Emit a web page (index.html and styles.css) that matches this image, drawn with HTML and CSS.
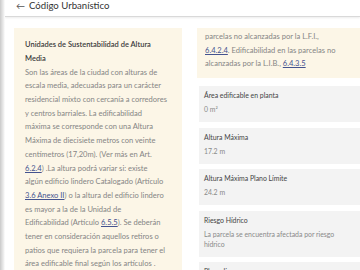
FILE: index.html
```html
<!DOCTYPE html>
<html lang="es">
<head>
<meta charset="utf-8">
<link rel="stylesheet" href="styles.css">
</head>
<body>
<div class="app">
  <div class="edge"></div>
  <div class="panel">
    <header class="topbar"><span class="back">←</span><span class="title">Código Urbanístico</span></header>
    <div class="content">
      <div class="col">
        <section class="note note-first">
          <h2 class="note-title">Unidades de Sustentabilidad de Altura<br>Media</h2>
          <p class="note-text">Son las áreas de la ciudad con alturas de<br>escala media, adecuadas para un carácter<br>residencial mixto con cercanía a corredores<br>y centros barriales. La edificabilidad<br>máxima se corresponde con una Altura<br>Máxima de diecisiete metros con veinte<br>centímetros (17,20m). (Ver más en Art.<br><a href="#">6.2.4</a>) .La altura podrá variar si: existe<br>algún edificio lindero Catalogado (Artículo<br><a href="#">3.6 Anexo II</a>) o la altura del edificio lindero<br>es mayor a la de la Unidad de<br>Edificabilidad (Artículo <a href="#">6.5.5</a>). Se deberán<br>tener en consideración aquellos retiros o<br>patios que requiera la parcela para tener el<br>área edificable final según los artículos .<br>Debe considerarse la Edificabilidad en las</p>
        </section>
      </div>
      <div class="col">
        <section class="note note-cont">
          <p class="note-text">parcelas no alcanzadas por la L.F.I.,<br><a href="#">6.4.2.4</a>. Edificabilidad en las parcelas no<br>alcanzadas por la L.I.B., <a href="#">6.4.3.5</a></p>
        </section>
        <div class="stats">
          <div class="stat"><div class="stat-label">Área edificable en planta</div><div class="stat-value">0 m²</div></div>
          <div class="stat"><div class="stat-label">Altura Máxima</div><div class="stat-value">17.2 m</div></div>
          <div class="stat"><div class="stat-label">Altura Máxima Plano Límite</div><div class="stat-value">24.2 m</div></div>
          <div class="stat"><div class="stat-label">Riesgo Hídrico</div><div class="stat-value">La parcela se encuentra afectada por riesgo<br>hídrico</div></div>
          <div class="stat"><div class="stat-label">Plusvalía</div><div class="stat-value">—</div></div>
        </div>
      </div>
    </div>
  </div>
</div>
</body>
</html>
```
FILE: styles.css
```css
* { box-sizing: border-box; }
html, body { margin: 0; padding: 0; }
body {
  width: 360px;
  height: 270px;
  overflow: hidden;
  background: #fff;
  font-family: Lato, "Open Sans", sans-serif;
}
.app { display: flex; height: 270px; }
.edge {
  width: 5px;
  flex: none;
  background: linear-gradient(to right, #c9c9c9 0, #dedede 2px, #f2f2f2 4px, #fff 5px);
}
.panel { flex: 1; min-width: 0; display: flex; flex-direction: column; overflow: hidden; }
.topbar {
  height: 17px;
  flex: none;
  display: flex;
  align-items: flex-start;
  padding-left: 11px;
  border-bottom: 1px solid #d9d9d9;
  box-shadow: 0 1px 2px rgba(0,0,0,0.08);
  color: #333;
  font-size: 9.6px;
  line-height: 12px;
}
.back { font-size: 9px; margin-right: 4px; color: #555; }
.content {
  display: grid;
  grid-template-columns: 168px 168px;
  column-gap: 15px;
  padding: 11px 0 0 9px;
  align-items: start;
}
.note { background: #fcf6e7; }
.note-first { padding: 10px 11px 20px; }
.note-cont { padding: 2px 8px 7px; }
.note-title {
  margin: 0;
  font-size: 7.5px;
  font-weight: 600;
  color: #3b3b3b;
  line-height: 13.8px;
  white-space: nowrap;
}
.note-text {
  margin: 0;
  font-size: 7.55px;
  color: #858585;
  line-height: 13.7px;
  white-space: nowrap;
}
.note-text a { color: #44538f; text-decoration: underline; }
.stats { display: flex; flex-direction: column; gap: 5.5px; margin-top: 8px; margin-left: 2px; }
.stat {
  background: #f3f3f3;
  padding: 4px 5px 8px;
  min-height: 36px;
}
.stat-label { font-size: 6.9px; line-height: 10px; color: #444; }
.stat-value { font-size: 6.9px; line-height: 10px; color: #8a8a8a; margin-top: 4px; }
```
